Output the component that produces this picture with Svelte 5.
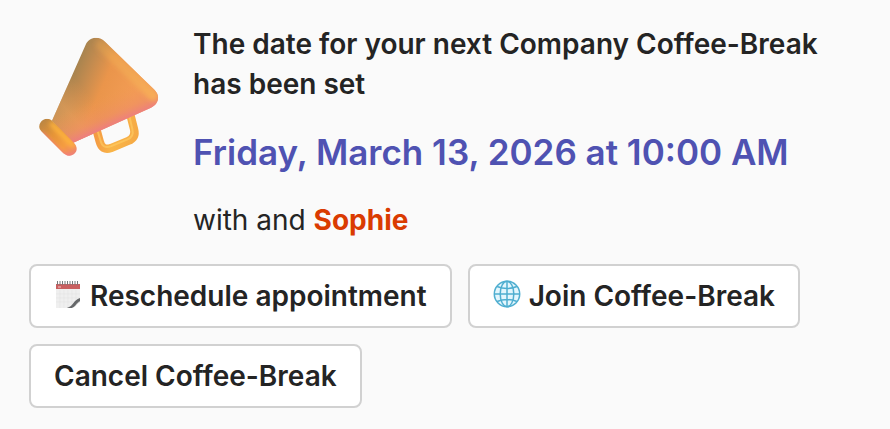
<script>
  let appointment = {
    title: 'The date for your next Company Coffee-Break has been set',
    date: 'Friday, March 13, 2026 at 10:00 AM',
    partner: 'Sophie'
  };

  let actions = [
    { id: 'reschedule', label: 'Reschedule appointment', icon: 'calendar' },
    { id: 'join', label: 'Join Coffee-Break', icon: 'globe' },
    { id: 'cancel', label: 'Cancel Coffee-Break', icon: null }
  ];
</script>

<main class="card">
  <header class="intro">
    <svg class="megaphone" viewBox="12 12 420 420" aria-hidden="true">
      <defs>
        <linearGradient id="cone" gradientUnits="userSpaceOnUse" x1="128" y1="172" x2="312" y2="253">
          <stop offset="0" stop-color="#a5834f" />
          <stop offset="0.22" stop-color="#c38b4f" />
          <stop offset="0.5" stop-color="#ea954b" />
          <stop offset="1" stop-color="#f39d55" />
        </linearGradient>
        <linearGradient id="cone-base" gradientUnits="userSpaceOnUse" x1="222" y1="215" x2="264" y2="312">
          <stop offset="0" stop-color="#f0964f" stop-opacity="0" />
          <stop offset="0.6" stop-color="#ee8a68" stop-opacity="0.5" />
          <stop offset="1" stop-color="#ec7490" />
        </linearGradient>
        <linearGradient id="cone-tip" gradientUnits="userSpaceOnUse" x1="110" y1="320" x2="215" y2="235">
          <stop offset="0" stop-color="#f0a45e" stop-opacity="0.5" />
          <stop offset="0.4" stop-color="#f3a65e" stop-opacity="0.5" />
          <stop offset="1" stop-color="#f1994f" stop-opacity="0" />
        </linearGradient>
        <linearGradient id="cone-rim" gradientUnits="userSpaceOnUse" x1="205" y1="50" x2="390" y2="225">
          <stop offset="0" stop-color="#c39050" />
          <stop offset="0.3" stop-color="#eea250" />
          <stop offset="1" stop-color="#f8ad59" />
        </linearGradient>
        <linearGradient id="mouth" gradientUnits="userSpaceOnUse" x1="50" y1="285" x2="140" y2="390">
          <stop offset="0" stop-color="#b98543" />
          <stop offset="0.4" stop-color="#e59438" />
          <stop offset="0.75" stop-color="#f59c42" />
          <stop offset="1" stop-color="#ef8470" />
        </linearGradient>
        <linearGradient id="handle" gradientUnits="userSpaceOnUse" x1="215" y1="330" x2="340" y2="350">
          <stop offset="0" stop-color="#f49b43" />
          <stop offset="0.4" stop-color="#f9b548" />
          <stop offset="1" stop-color="#f5a945" />
        </linearGradient>
        <filter id="soft" x="-20%" y="-20%" width="140%" height="140%">
          <feGaussianBlur stdDeviation="7" />
        </filter>
        <clipPath id="cone-shape">
          <path d="M182 59C193 34 223 32 240 50L389 195C407 214 400 238 378 248L143 354L81 287Z" />
        </clipPath>
        <clipPath id="mouth-shape">
          <path d="M47 292C55 280 71 278 82 288L147 354C161 370 155 384 142 390C130 396 119 389 112 382L49 319C41 310 41 301 47 292Z" />
        </clipPath>
      </defs>
      <path d="M212 305L224 349Q231 378 258 369L309 348Q334 338 327 312L315 265" fill="none" stroke="url(#handle)" stroke-width="25" />
      <path d="M214 305L227 348Q233 372 257 364L306 344Q328 336 322 312L311 265" fill="none" stroke="#ffcf65" stroke-opacity="0.6" stroke-width="6" />
      <g clip-path="url(#cone-shape)">
        <rect x="60" y="20" width="360" height="350" fill="url(#cone)" />
        <rect x="60" y="20" width="360" height="350" fill="url(#cone-tip)" />
        <rect x="60" y="20" width="360" height="350" fill="url(#cone-base)" />
        <path d="M228 60L384 212" fill="none" stroke="url(#cone-rim)" stroke-width="30" stroke-linecap="round" filter="url(#soft)" />
      </g>
      <g clip-path="url(#mouth-shape)">
        <rect x="36" y="270" width="130" height="130" fill="url(#mouth)" />
        <path d="M77 294L148 366" fill="none" stroke="#ffb63c" stroke-width="13" filter="url(#soft)" />
        <path d="M48 326L115 394L144 398" fill="none" stroke="#f4778b" stroke-width="12" filter="url(#soft)" />
      </g>
    </svg>

    <div class="details">
      <h1>{appointment.title}</h1>
      <p class="date">{appointment.date}</p>
      <p class="people">with and <strong>{appointment.partner}</strong></p>
    </div>
  </header>

  <div class="actions">
    {#each actions as action (action.id)}
      <button type="button">
        {#if action.icon === 'calendar'}
          <svg class="icon" viewBox="0 0 28 28" aria-hidden="true">
            <path d="M2 4H26V28H2Z" fill="#efefef" />
            <path d="M6 10V28M10 10V28M14 10V28M18 10V28M22 10V28M2 14H26M2 18H26M2 22H26" stroke="#e2e2e2" stroke-width="0.6" />
            <path d="M2 4H26V9H2Z" fill="#c95f60" />
            <path d="M4 7H7" stroke="#edb5b5" stroke-width="1.2" />
            <path d="M3.5 1V5M6 1V5M8.5 1V5M11 1V5M13.5 1V5M16 1V5M18.5 1V5M21 1V5M23.5 1V5" stroke="#77797b" stroke-width="1" />
            <path d="M26 19V28H13C19 26 19 21 26 19Z" fill="#c9c9c9" />
            <path d="M26 18C19 20 20 26 13 28H18C22 26 22 23 26 21Z" fill="#66686a" />
            <path d="M26 22C22 24 22 27 18 28H26Z" fill="#fff" />
          </svg>
        {:else if action.icon === 'globe'}
          <svg class="icon" viewBox="0 0 28 28" aria-hidden="true">
            <circle cx="14" cy="14" r="13" fill="#e3f6fd" />
            <g fill="none" stroke="#4faed0" stroke-width="1.5">
              <circle cx="14" cy="14" r="12.7" />
              <ellipse cx="14" cy="14" rx="6.8" ry="12.7" />
              <path d="M14 1V27M1 14H27M4 6.5Q14 10.5 24 6.5M4 21.5Q14 17.5 24 21.5" />
            </g>
          </svg>
        {/if}
        <span>{action.label}</span>
      </button>
    {/each}
  </div>
</main>

<style>
  :global(body) {
    margin: 0;
    background: #fafafa;
  }

  .card {
    padding: 24px 29px;
    color: #242424;
    font-family: Inter, 'Liberation Sans', sans-serif;
    font-size: 28px;
    line-height: 40px;
  }

  .intro {
    display: flex;
    align-items: flex-start;
    gap: 24px;
  }

  .megaphone {
    flex: none;
    width: 140px;
    height: 140px;
    margin-top: 5px;
  }

  .details {
    display: flex;
    flex: 1;
    flex-direction: column;
    gap: 24px;
  }

  h1,
  p {
    margin: 0;
    font-size: 28px;
    font-weight: 400;
  }

  h1 {
    font-weight: 600;
  }

  .date {
    color: #4f52b2;
    font-size: 35px;
    font-weight: 600;
    line-height: 48px;
  }

  strong {
    color: #da3b01;
    font-weight: 700;
  }

  .actions {
    display: flex;
    flex-wrap: wrap;
    gap: 16px;
    margin-top: 24px;
  }

  button {
    display: flex;
    align-items: center;
    gap: 8px;
    padding: 10px 23px;
    border: 2px solid #d1d1d1;
    border-radius: 8px;
    background: #fff;
    color: inherit;
    font: inherit;
    font-weight: 600;
    cursor: pointer;
  }

  button:hover {
    background: #f5f5f5;
  }

  .icon {
    flex: none;
    width: 28px;
    height: 28px;
    margin-bottom: 4px;
  }
</style>
